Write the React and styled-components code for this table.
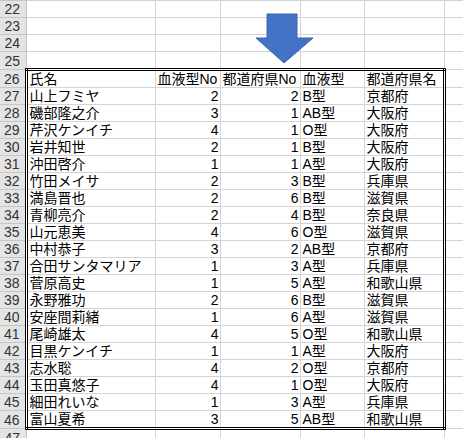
import React from "react";
import styled, { createGlobalStyle } from "styled-components";

const GlobalStyle = createGlobalStyle`
  html, body {
    margin: 0;
    padding: 0;
    background: #ffffff;
  }
  body {
    font-family: "Liberation Sans", "Noto Sans CJK JP", sans-serif;
    overflow: hidden;
  }
`;

const Sheet = styled.div`
  position: relative;
  width: 463px;
  height: 438px;
  overflow: hidden;
`;

const Grid = styled.table`
  border-collapse: collapse;
  table-layout: fixed;
  width: ${(p) => p.$width}px;
  font-size: 14px;
  color: #000;
`;

const RowHead = styled.th`
  height: 16px;
  padding: 0 1px 0 0;
  background: #e4e4e4;
  color: #333;
  font-weight: normal;
  font-size: 14px;
  text-align: center;
  line-height: 16px;
  border: 1px solid #c6c6c6;
  border-left: none;
`;

const Cell = styled.td`
  height: 16px;
  padding: 0 1px 0 2px;
  line-height: 16px;
  white-space: nowrap;
  overflow: hidden;
  text-align: ${(p) => (p.$num ? "right" : "left")};
  border-top: ${(p) => (p.$top ? "3px double #000" : "1px solid #d4d4d4")};
  border-bottom: ${(p) => (p.$bottom ? "3px double #000" : "1px solid #d4d4d4")};
  border-left: ${(p) => (p.$left ? "3px double #000" : "1px solid #d4d4d4")};
  border-right: ${(p) => (p.$right ? "3px double #000" : "1px solid #d4d4d4")};
`;

const Arrow = styled.svg`
  position: absolute;
  left: 0;
  top: 0;
  pointer-events: none;
`;

const headWidth = 26;
const widths = [129, 65, 80, 64, 80, 60];

const header = ["氏名", "血液型No", "都道府県No", "血液型", "都道府県名"];

const people = [
  ["山上フミヤ", 2, 2, "B型", "京都府"],
  ["磯部隆之介", 3, 1, "AB型", "大阪府"],
  ["芹沢ケンイチ", 4, 1, "O型", "大阪府"],
  ["岩井知世", 2, 1, "B型", "大阪府"],
  ["沖田啓介", 1, 1, "A型", "大阪府"],
  ["竹田メイサ", 2, 3, "B型", "兵庫県"],
  ["満島晋也", 2, 6, "B型", "滋賀県"],
  ["青柳亮介", 2, 4, "B型", "奈良県"],
  ["山元恵美", 4, 6, "O型", "滋賀県"],
  ["中村恭子", 3, 2, "AB型", "京都府"],
  ["合田サンタマリア", 1, 3, "A型", "兵庫県"],
  ["菅原高史", 1, 5, "A型", "和歌山県"],
  ["永野雅功", 2, 6, "B型", "滋賀県"],
  ["安座間莉緒", 1, 6, "A型", "滋賀県"],
  ["尾崎雄太", 4, 5, "O型", "和歌山県"],
  ["目黒ケンイチ", 1, 1, "A型", "大阪府"],
  ["志水聡", 4, 2, "O型", "京都府"],
  ["玉田真悠子", 4, 1, "O型", "大阪府"],
  ["細田れいな", 1, 3, "A型", "兵庫県"],
  ["富山夏希", 3, 5, "AB型", "和歌山県"],
];

const rows = [
  ...[22, 23, 24, 25].map((n) => ({ n, cells: null })),
  { n: 26, cells: header, head: true },
  ...people.map((p, i) => ({ n: 27 + i, cells: p })),
  { n: 47, cells: null },
];

const App = () => {
  const last = rows.length - 2;
  const total = headWidth + widths.reduce((a, b) => a + b, 0);
  return (
    <Sheet>
      <GlobalStyle />
      <Grid $width={total}>
        <colgroup>
          <col style={{ width: headWidth }} />
          {widths.map((w, i) => (
            <col key={i} style={{ width: w }} />
          ))}
        </colgroup>
        <tbody>
          {rows.map((row, ri) => {
            const inBlock = row.cells !== null;
            return (
              <tr key={row.n}>
                <RowHead>{row.n}</RowHead>
                {widths.map((_, ci) => {
                  if (!inBlock || ci > 4) return <Cell key={ci} />;
                  const value = row.cells[ci];
                  const num = !row.head && typeof value === "number";
                  return (
                    <Cell
                      key={ci}
                      $num={num}
                      $top={row.head}
                      $bottom={ri === last}
                      $left={ci === 0}
                      $right={ci === 4}
                    >
                      {value}
                    </Cell>
                  );
                })}
              </tr>
            );
          })}
        </tbody>
      </Grid>
      <Arrow width="463" height="438">
        <polygon
          points="267,14 297,14 297,38 313,38 284,63 256,38 267,38"
          fill="#4472c4"
          stroke="#3a65b0"
          strokeWidth="1"
        />
      </Arrow>
    </Sheet>
  );
};

export default App;
